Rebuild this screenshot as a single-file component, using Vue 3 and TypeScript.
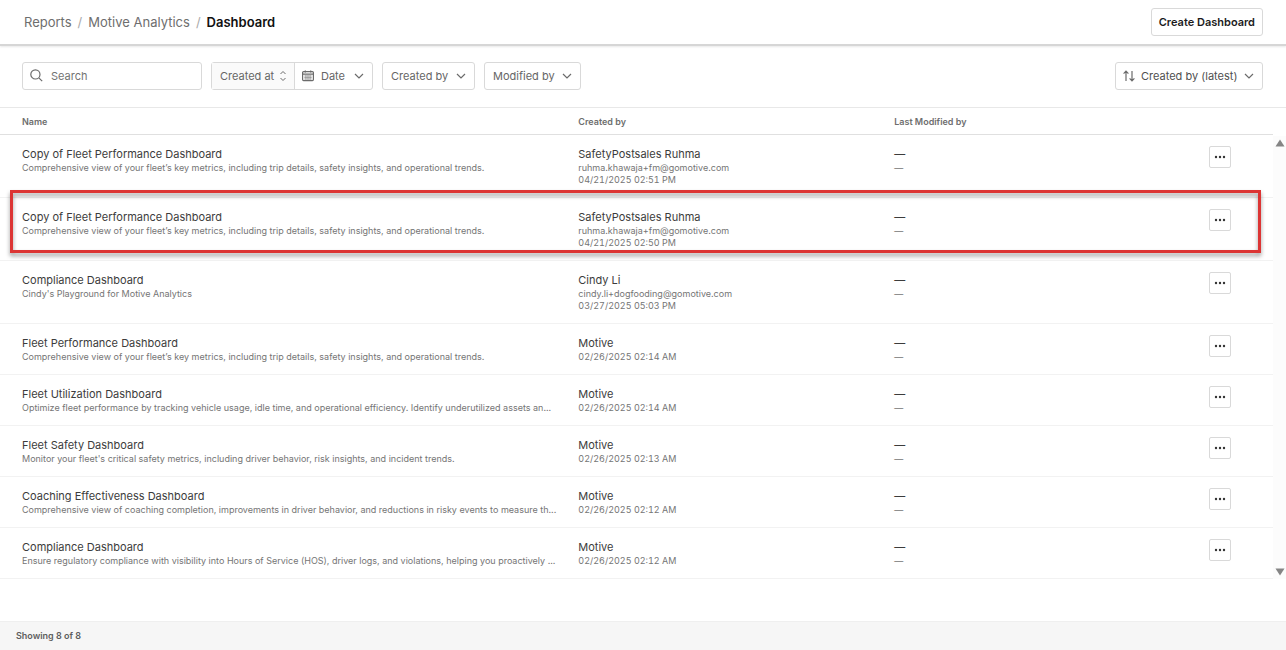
<script setup lang="ts">
import { ref } from 'vue'

interface DashboardRow {
  id: number
  name: string
  description: string
  author: string
  email?: string
  date: string
  highlighted?: boolean
}

const fleetText =
  'Comprehensive view of your fleet’s key metrics, including trip details, safety insights, and operational trends.'

const rows: DashboardRow[] = [
  { id: 1, name: 'Copy of Fleet Performance Dashboard', description: fleetText, author: 'SafetyPostsales Ruhma', email: 'ruhma.khawaja+fm@gomotive.com', date: '04/21/2025 02:51 PM' },
  { id: 2, name: 'Copy of Fleet Performance Dashboard', description: fleetText, author: 'SafetyPostsales Ruhma', email: 'ruhma.khawaja+fm@gomotive.com', date: '04/21/2025 02:50 PM', highlighted: true },
  { id: 3, name: 'Compliance Dashboard', description: "Cindy's Playground for Motive Analytics", author: 'Cindy Li', email: 'cindy.li+dogfooding@gomotive.com', date: '03/27/2025 05:03 PM' },
  { id: 4, name: 'Fleet Performance Dashboard', description: fleetText, author: 'Motive', date: '02/26/2025 02:14 AM' },
  { id: 5, name: 'Fleet Utilization Dashboard', description: 'Optimize fleet performance by tracking vehicle usage, idle time, and operational efficiency. Identify underutilized assets an...', author: 'Motive', date: '02/26/2025 02:14 AM' },
  { id: 6, name: 'Fleet Safety Dashboard', description: "Monitor your fleet's critical safety metrics, including driver behavior, risk insights, and incident trends.", author: 'Motive', date: '02/26/2025 02:13 AM' },
  { id: 7, name: 'Coaching Effectiveness Dashboard', description: 'Comprehensive view of coaching completion, improvements in driver behavior, and reductions in risky events to measure th...', author: 'Motive', date: '02/26/2025 02:12 AM' },
  { id: 8, name: 'Compliance Dashboard', description: 'Ensure regulatory compliance with visibility into Hours of Service (HOS), driver logs, and violations, helping you proactively ...', author: 'Motive', date: '02/26/2025 02:12 AM' },
]

const search = ref('')
</script>

<template>
  <div class="page">
    <header class="topbar">
      <nav class="crumbs" aria-label="Breadcrumb">
        <a href="#reports">Reports</a>
        <span class="slash">/</span>
        <a href="#analytics">Motive Analytics</a>
        <span class="slash">/</span>
        <strong>Dashboard</strong>
      </nav>
      <button class="create" type="button">Create Dashboard</button>
    </header>

    <section class="filters">
      <label class="control search">
        <svg width="13" height="13" viewBox="0 0 13 13"><circle cx="5.4" cy="5.4" r="4.6" /><path d="M8.8 8.8 12.2 12.2" /></svg>
        <input v-model="search" type="search" placeholder="Search" aria-label="Search" />
      </label>

      <div class="control group">
        <label class="part shaded">
          <select aria-label="Date field"><option>Created at</option></select>
          <svg width="8" height="12" viewBox="0 0 8 12"><path d="M1.5 4 4 1.5 6.5 4M1.5 8 4 10.5 6.5 8" /></svg>
        </label>
        <button class="part date" type="button">
          <svg width="12" height="12" viewBox="0 0 12 12">
            <rect x="0.6" y="1.6" width="10.8" height="9" rx="1" />
            <path d="M0.6 4.2H11.4M3.3 0.4V2.6M8.7 0.4V2.6" />
            <path class="fine" d="M2.2 6H9.8M2.2 7.5H9.8M2.2 9H9.8M3.9 5V9.8M6 5V9.8M8.1 5V9.8" />
          </svg>
          <span>Date</span>
          <svg class="chevron" width="10" height="6" viewBox="0 0 10 6"><path d="M1 1 5 5 9 1" /></svg>
        </button>
      </div>

      <label class="control menu">
        <select aria-label="Created by"><option>Created by</option></select>
        <svg class="chevron" width="10" height="6" viewBox="0 0 10 6"><path d="M1 1 5 5 9 1" /></svg>
      </label>

      <label class="control menu">
        <select aria-label="Modified by"><option>Modified by</option></select>
        <svg class="chevron" width="10" height="6" viewBox="0 0 10 6"><path d="M1 1 5 5 9 1" /></svg>
      </label>

      <label class="control sort">
        <svg width="12" height="12" viewBox="0 0 12 12"><path d="M3 11V1.2M0.6 3.6 3 1.2 5.4 3.6M9 1V10.8M6.6 8.4 9 10.8 11.4 8.4" /></svg>
        <select aria-label="Sort order"><option>Created by (latest)</option></select>
        <svg class="chevron" width="10" height="6" viewBox="0 0 10 6"><path d="M1 1 5 5 9 1" /></svg>
      </label>
    </section>

    <main class="list">
      <table>
        <colgroup><col /><col class="creator" /><col class="editor" /><col class="action" /></colgroup>
        <thead>
          <tr>
            <th scope="col">Name</th>
            <th scope="col">Created by</th>
            <th scope="col">Last Modified by</th>
            <th aria-label="Actions"></th>
          </tr>
        </thead>
        <tbody>
          <tr v-for="row in rows" :key="row.id">
            <td>
              <div class="name">{{ row.name }}</div>
              <div class="note">{{ row.description }}</div>
              <div v-if="row.highlighted" class="highlight"></div>
            </td>
            <td>
              <div class="name">{{ row.author }}</div>
              <div v-if="row.email" class="note">{{ row.email }}</div>
              <div class="stamp">{{ row.date }}</div>
            </td>
            <td>
              <div class="name">—</div>
              <div class="note">—</div>
            </td>
            <td class="actions">
              <button class="more" type="button" aria-label="More actions">
                <svg width="12" height="4" viewBox="0 0 12 4"><circle cx="2" cy="2" r="1.2" /><circle cx="6" cy="2" r="1.2" /><circle cx="10" cy="2" r="1.2" /></svg>
              </button>
            </td>
          </tr>
        </tbody>
      </table>
      <div class="scrollbar" aria-hidden="true">
        <svg width="10" height="8" viewBox="0 0 10 8"><path d="M5 0.5 9.5 7.5H0.5Z" /></svg>
        <svg width="10" height="8" viewBox="0 0 10 8"><path d="M5 7.5 0.5 0.5H9.5Z" /></svg>
      </div>
    </main>

    <footer class="footer">Showing 8 of 8</footer>
  </div>
</template>

<style>
body {
  margin: 0;
  background: #fff;
}
</style>

<style scoped>
.page {
  display: flex;
  flex-direction: column;
  min-height: 100vh;
  font-family: Inter, "Liberation Sans", sans-serif;
  font-size: 11px;
  color: #444;
}
.page * {
  box-sizing: border-box;
}
svg {
  flex: none;
  fill: none;
  stroke: #6b6b6b;
  stroke-width: 1.2;
}
button,
input,
select {
  font: inherit;
  color: inherit;
  margin: 0;
  padding: 0;
  border: 0;
  background: none;
  outline: none;
}
select {
  appearance: none;
}
.topbar {
  display: flex;
  align-items: center;
  justify-content: space-between;
  height: 46px;
  padding: 0 23px 0 24px;
  border-bottom: 2px solid #d6d6d6;
  box-shadow: 0 1px 2px #e8e8e8;
}
.crumbs {
  display: flex;
  gap: 6px;
  font-size: 13px;
  line-height: 20px;
  color: #6e6e6e;
}
.crumbs a {
  color: inherit;
  text-decoration: none;
}
.crumbs strong {
  font-weight: 600;
  color: #111;
}
.slash {
  color: #aaa;
}
.create {
  height: 28px;
  padding: 0 7px;
  border: 1px solid #d9d9d9;
  border-radius: 3px;
  font-weight: 600;
  color: #1c1c1c;
}
.filters {
  display: flex;
  align-items: center;
  gap: 9px;
  height: 61px;
  padding: 0 23px 2px 22px;
}
.control {
  display: flex;
  align-items: center;
  height: 28px;
  border: 1px solid #d9d9d9;
  border-radius: 3px;
  color: #666;
}
.search {
  width: 180px;
  gap: 8px;
  padding: 0 7px;
}
.search input {
  flex: 1;
  min-width: 0;
}
.search input::placeholder {
  color: #737373;
  opacity: 1;
}
.part {
  display: flex;
  align-items: center;
  height: 100%;
}
.shaded {
  gap: 4px;
  padding: 0 7px 0 8px;
  background: #fafafa;
}
.shaded svg {
  stroke-width: 1;
}
.date {
  gap: 7px;
  padding: 0 8px 0 7px;
  border-left: 1px solid #d9d9d9;
}
.date .fine {
  stroke-width: 0.5;
}
.date .chevron {
  margin-left: 2px;
}
.menu {
  gap: 7px;
  padding: 0 8px;
}
.sort {
  gap: 6px;
  margin-left: auto;
  padding: 0 8px 0 7px;
  color: #505050;
}
.list {
  display: flex;
  border-top: 1px solid #e8e8e8;
}
table {
  flex: 1;
  min-width: 0;
  table-layout: fixed;
  border-collapse: separate;
  border-spacing: 0;
}
.creator {
  width: 316px;
}
.editor {
  width: 315px;
}
.action {
  width: 86px;
}
th {
  height: 27px;
  padding: 0 0 0 22px;
  border-bottom: 1px solid #e0e0e0;
  text-align: left;
  font-size: 9px;
  font-weight: 600;
  color: #6e6e6e;
}
tbody tr {
  position: relative;
}
td {
  padding: 12px 0 11px 22px;
  border-bottom: 1px solid #f2f2f2;
  vertical-align: top;
  white-space: nowrap;
}
.actions {
  padding-top: 11px;
}
.name {
  line-height: 15px;
  color: #3c3c3c;
}
.note,
.stamp {
  font-size: 9px;
  line-height: 12px;
  color: #757575;
}
.stamp {
  font-variant-numeric: tabular-nums;
}
.more {
  display: flex;
  align-items: center;
  justify-content: center;
  width: 22px;
  height: 22px;
  border: 1px solid #d9d9d9;
  border-radius: 2px;
}
.more svg {
  fill: #333;
  stroke: none;
}
.highlight {
  position: absolute;
  inset: -8px 12px 8px 10px;
  border: 3px solid #dc3534;
  filter: drop-shadow(0 3px 2px rgba(0, 0, 0, 0.4));
  pointer-events: none;
}
.scrollbar {
  display: flex;
  flex-direction: column;
  align-items: center;
  justify-content: space-between;
  width: 13px;
  margin-top: 28px;
  padding: 3px 0;
  background: #fcfcfc;
}
.scrollbar svg {
  fill: #858585;
  stroke: none;
}
.footer {
  margin-top: auto;
  height: 29px;
  padding-left: 16px;
  border-top: 1px solid #efefef;
  background: #f6f6f6;
  font-size: 9px;
  line-height: 27px;
  font-weight: 600;
  color: #5e5e5e;
}
</style>
